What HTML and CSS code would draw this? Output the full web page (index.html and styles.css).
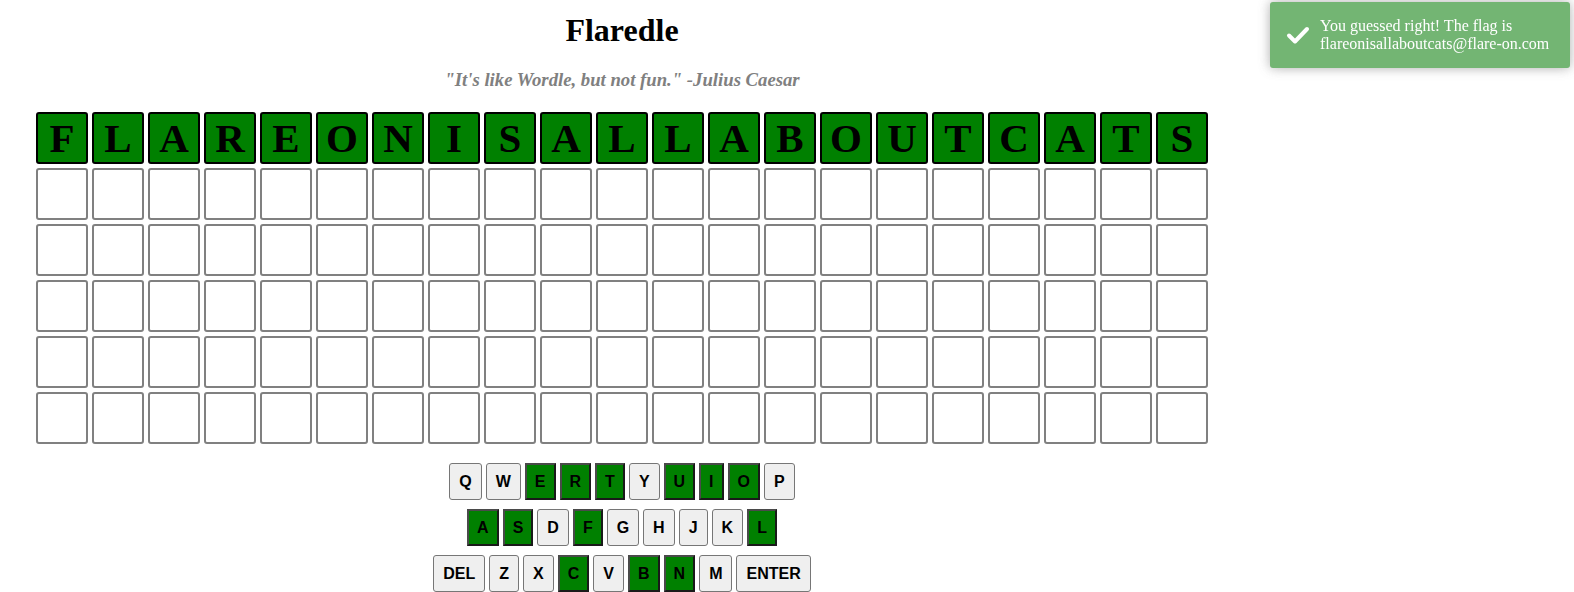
FILE: index.html
```html
<!DOCTYPE html>
<html>
<head>
<meta charset="utf-8">
<title>Flaredle</title>
<link rel="stylesheet" href="styles.css">
</head>
<body>
<div class="game">
  <h1 class="title">Flaredle</h1>
  <h3 class="quote">"It's like Wordle, but not fun." -Julius Caesar</h3>
  <div class="board">
    <div class="row">
      <div class="tile hit">F</div><div class="tile hit">L</div><div class="tile hit">A</div><div class="tile hit">R</div><div class="tile hit">E</div><div class="tile hit">O</div><div class="tile hit">N</div><div class="tile hit">I</div><div class="tile hit">S</div><div class="tile hit">A</div><div class="tile hit">L</div><div class="tile hit">L</div><div class="tile hit">A</div><div class="tile hit">B</div><div class="tile hit">O</div><div class="tile hit">U</div><div class="tile hit">T</div><div class="tile hit">C</div><div class="tile hit">A</div><div class="tile hit">T</div><div class="tile hit">S</div>
    </div>
    <div class="row">
      <div class="tile"></div><div class="tile"></div><div class="tile"></div><div class="tile"></div><div class="tile"></div><div class="tile"></div><div class="tile"></div><div class="tile"></div><div class="tile"></div><div class="tile"></div><div class="tile"></div><div class="tile"></div><div class="tile"></div><div class="tile"></div><div class="tile"></div><div class="tile"></div><div class="tile"></div><div class="tile"></div><div class="tile"></div><div class="tile"></div><div class="tile"></div>
    </div>
    <div class="row">
      <div class="tile"></div><div class="tile"></div><div class="tile"></div><div class="tile"></div><div class="tile"></div><div class="tile"></div><div class="tile"></div><div class="tile"></div><div class="tile"></div><div class="tile"></div><div class="tile"></div><div class="tile"></div><div class="tile"></div><div class="tile"></div><div class="tile"></div><div class="tile"></div><div class="tile"></div><div class="tile"></div><div class="tile"></div><div class="tile"></div><div class="tile"></div>
    </div>
    <div class="row">
      <div class="tile"></div><div class="tile"></div><div class="tile"></div><div class="tile"></div><div class="tile"></div><div class="tile"></div><div class="tile"></div><div class="tile"></div><div class="tile"></div><div class="tile"></div><div class="tile"></div><div class="tile"></div><div class="tile"></div><div class="tile"></div><div class="tile"></div><div class="tile"></div><div class="tile"></div><div class="tile"></div><div class="tile"></div><div class="tile"></div><div class="tile"></div>
    </div>
    <div class="row">
      <div class="tile"></div><div class="tile"></div><div class="tile"></div><div class="tile"></div><div class="tile"></div><div class="tile"></div><div class="tile"></div><div class="tile"></div><div class="tile"></div><div class="tile"></div><div class="tile"></div><div class="tile"></div><div class="tile"></div><div class="tile"></div><div class="tile"></div><div class="tile"></div><div class="tile"></div><div class="tile"></div><div class="tile"></div><div class="tile"></div><div class="tile"></div>
    </div>
    <div class="row">
      <div class="tile"></div><div class="tile"></div><div class="tile"></div><div class="tile"></div><div class="tile"></div><div class="tile"></div><div class="tile"></div><div class="tile"></div><div class="tile"></div><div class="tile"></div><div class="tile"></div><div class="tile"></div><div class="tile"></div><div class="tile"></div><div class="tile"></div><div class="tile"></div><div class="tile"></div><div class="tile"></div><div class="tile"></div><div class="tile"></div><div class="tile"></div>
    </div>
  </div>
  <div class="keyboard">
    <div class="krow">
      <button class="key">Q</button><button class="key">W</button><button class="key hit">E</button><button class="key hit">R</button><button class="key hit">T</button><button class="key">Y</button><button class="key hit">U</button><button class="key hit">I</button><button class="key hit">O</button><button class="key">P</button>
    </div>
    <div class="krow">
      <button class="key hit">A</button><button class="key hit">S</button><button class="key">D</button><button class="key hit">F</button><button class="key">G</button><button class="key">H</button><button class="key">J</button><button class="key">K</button><button class="key hit">L</button>
    </div>
    <div class="krow">
      <button class="key">DEL</button><button class="key">Z</button><button class="key">X</button><button class="key hit">C</button><button class="key">V</button><button class="key hit">B</button><button class="key hit">N</button><button class="key">M</button><button class="key">ENTER</button>
    </div>
  </div>
</div>
<div class="toast">
  <svg class="toast-icon" width="26" height="26" viewBox="0 0 26 26"><path d="M4 13.5 L10 19.5 L22 7" fill="none" stroke="#fff" stroke-width="4" stroke-linecap="round" stroke-linejoin="round"/></svg>
  <div class="toast-msg">You guessed right! The flag is flareonisallaboutcats@flare-on.com</div>
</div>
</body>
</html>
```
FILE: styles.css
```css
html, body {
  margin: 0;
  padding: 0;
  background: #fff;
}
body {
  padding: 0 8px;
  font-family: "Liberation Serif", "Times New Roman", serif;
  overflow: hidden;
}
.game {
  width: 1228px;
  display: flex;
  flex-direction: column;
  align-items: center;
}
.title {
  margin: 12px 0 0;
  font-size: 32px;
  font-weight: bold;
  line-height: 36px;
  color: #000;
}
.quote {
  margin: 21px 0 0;
  font-size: 18.72px;
  font-weight: bold;
  font-style: italic;
  color: #808080;
  line-height: 22px;
}
.board {
  margin-top: 21px;
  display: flex;
  flex-direction: column;
  gap: 4px;
}
.row {
  display: flex;
  gap: 4px;
}
.tile {
  box-sizing: border-box;
  width: 52px;
  height: 52px;
  border: 2px solid #808080;
  border-radius: 3px;
  display: flex;
  align-items: center;
  justify-content: center;
  font-size: 41px;
  font-weight: bold;
  color: #000;
  line-height: 1;
}
.tile.hit {
  background: #008000;
  border-color: #000;
}
.keyboard {
  margin-top: 19px;
  display: flex;
  flex-direction: column;
  align-items: center;
  gap: 9px;
}
.krow {
  display: flex;
  gap: 4px;
}
.key {
  box-sizing: border-box;
  height: 37px;
  margin: 0;
  padding: 0 9px;
  font-family: "Liberation Sans", Arial, sans-serif;
  font-size: 16px;
  font-weight: bold;
  color: #000;
  background: #efefef;
  border: 1px solid #767676;
  border-radius: 3px;
}
.key.hit {
  background: #008000;
  padding: 0 8px;
  border-width: 2px;
  border-style: solid;
  border-color: #4a4a4a #1a1a1a #1a1a1a #4a4a4a;
  border-radius: 0;
}
.toast {
  position: fixed;
  top: 2px;
  right: 4px;
  width: 300px;
  box-sizing: border-box;
  padding: 15px 15px 15px 50px;
  background: #51a351;
  opacity: 0.8;
  color: #fff;
  border-radius: 3px;
  box-shadow: 0 0 12px #999;
  font-size: 16px;
}
.toast-icon {
  position: absolute;
  left: 15px;
  top: 50%;
  margin-top: -13px;
}
.toast-msg {
  line-height: 18px;
}
```
